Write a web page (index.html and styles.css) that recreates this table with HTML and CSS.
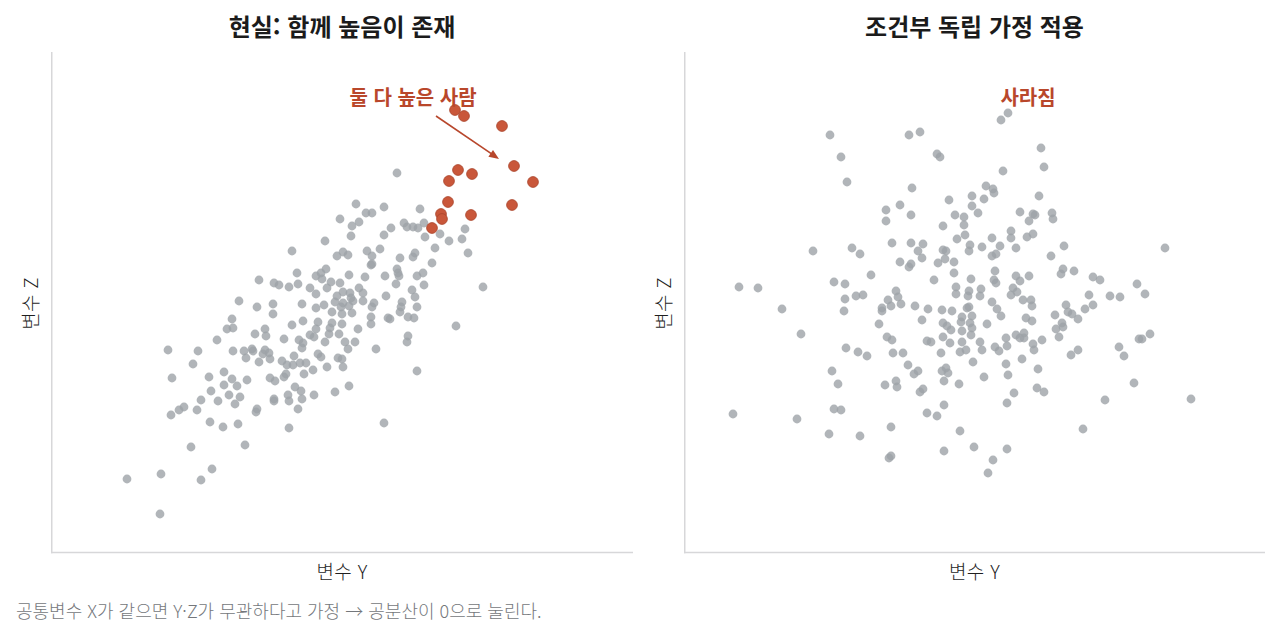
FILE: index.html
```html
<!DOCTYPE html>
<html lang="ko">
<head>
<meta charset="utf-8">
<title>조건부 독립</title>
<link rel="stylesheet" href="styles.css">
</head>
<body>
<div class="figure">
  <div class="panels">
    <section class="panel panel-left">
      <h2 class="title">현실: 함께 높음이 존재</h2>
      <div class="ylabel"><span>변수 Z</span></div>
      <svg class="plot" width="582" height="502" viewBox="51 52 582 502">
        <line class="spine" x1="51.75" y1="52" x2="51.75" y2="553.25"/>
        <line class="spine" x1="51" y1="552.5" x2="633" y2="552.5"/>
        <g class="pts">
          <circle cx="239" cy="301" r="4.4"/><circle cx="257" cy="307" r="4.4"/><circle cx="273" cy="304" r="4.4"/><circle cx="273" cy="314" r="4.4"/><circle cx="302" cy="304" r="4.4"/><circle cx="316" cy="308" r="4.4"/><circle cx="324" cy="305" r="4.4"/><circle cx="232" cy="319" r="4.4"/><circle cx="227" cy="329" r="4.4"/><circle cx="233" cy="328" r="4.4"/><circle cx="255" cy="334" r="4.4"/><circle cx="265" cy="329" r="4.4"/><circle cx="266" cy="336" r="4.4"/><circle cx="292" cy="325" r="4.4"/><circle cx="303" cy="321" r="4.4"/><circle cx="318" cy="322" r="4.4"/><circle cx="316" cy="329" r="4.4"/><circle cx="310" cy="335" r="4.4"/><circle cx="314" cy="337" r="4.4"/><circle cx="217" cy="340" r="4.4"/><circle cx="284" cy="339" r="4.4"/><circle cx="299" cy="340" r="4.4"/><circle cx="303" cy="343" r="4.4"/><circle cx="302" cy="348" r="4.4"/><circle cx="325" cy="342" r="4.4"/><circle cx="168" cy="350" r="4.4"/><circle cx="198" cy="351" r="4.4"/><circle cx="233" cy="351" r="4.4"/><circle cx="244" cy="351" r="4.4"/><circle cx="252" cy="349" r="4.4"/><circle cx="253" cy="351" r="4.4"/><circle cx="246" cy="358" r="4.4"/><circle cx="259" cy="362" r="4.4"/><circle cx="265" cy="350" r="4.4"/><circle cx="269" cy="353" r="4.4"/><circle cx="270" cy="359" r="4.4"/><circle cx="263" cy="354" r="4.4"/><circle cx="282" cy="361" r="4.4"/><circle cx="287" cy="365" r="4.4"/><circle cx="293" cy="365" r="4.4"/><circle cx="294" cy="356" r="4.4"/><circle cx="300" cy="363" r="4.4"/><circle cx="306" cy="363" r="4.4"/><circle cx="318" cy="354" r="4.4"/><circle cx="321" cy="357" r="4.4"/><circle cx="327" cy="367" r="4.4"/><circle cx="193" cy="364" r="4.4"/><circle cx="313" cy="370" r="4.4"/><circle cx="304" cy="374" r="4.4"/><circle cx="172" cy="378" r="4.4"/><circle cx="209" cy="377" r="4.4"/><circle cx="224" cy="372" r="4.4"/><circle cx="232" cy="379" r="4.4"/><circle cx="224" cy="385" r="4.4"/><circle cx="237" cy="386" r="4.4"/><circle cx="247" cy="380" r="4.4"/><circle cx="270" cy="378" r="4.4"/><circle cx="275" cy="381" r="4.4"/><circle cx="284" cy="377" r="4.4"/><circle cx="286" cy="374" r="4.4"/><circle cx="295" cy="387" r="4.4"/><circle cx="301" cy="391" r="4.4"/><circle cx="211" cy="391" r="4.4"/><circle cx="201" cy="400" r="4.4"/><circle cx="218" cy="401" r="4.4"/><circle cx="229" cy="395" r="4.4"/><circle cx="240" cy="397" r="4.4"/><circle cx="235" cy="404" r="4.4"/><circle cx="288" cy="395" r="4.4"/><circle cx="289" cy="401" r="4.4"/><circle cx="302" cy="399" r="4.4"/><circle cx="314" cy="395" r="4.4"/><circle cx="274" cy="399" r="4.4"/><circle cx="274" cy="401" r="4.4"/><circle cx="298" cy="409" r="4.4"/><circle cx="184" cy="407" r="4.4"/><circle cx="179" cy="410" r="4.4"/><circle cx="197" cy="410" r="4.4"/><circle cx="171" cy="415" r="4.4"/><circle cx="257" cy="409" r="4.4"/><circle cx="256" cy="412" r="4.4"/><circle cx="210" cy="422" r="4.4"/><circle cx="223" cy="427" r="4.4"/><circle cx="238" cy="424" r="4.4"/><circle cx="289" cy="428" r="4.4"/><circle cx="191" cy="447" r="4.4"/><circle cx="245" cy="445" r="4.4"/><circle cx="161" cy="474" r="4.4"/><circle cx="127" cy="479" r="4.4"/><circle cx="212" cy="469" r="4.4"/><circle cx="201" cy="480" r="4.4"/><circle cx="160" cy="514" r="4.4"/>
          <circle cx="397" cy="173" r="4.4"/><circle cx="356" cy="204" r="4.4"/><circle cx="384" cy="207" r="4.4"/><circle cx="420" cy="209" r="4.4"/><circle cx="340" cy="219" r="4.4"/><circle cx="366" cy="213" r="4.4"/><circle cx="372" cy="213" r="4.4"/><circle cx="359" cy="222" r="4.4"/><circle cx="352" cy="226" r="4.4"/><circle cx="391" cy="228" r="4.4"/><circle cx="404" cy="223" r="4.4"/><circle cx="407" cy="227" r="4.4"/><circle cx="413" cy="227" r="4.4"/><circle cx="418" cy="228" r="4.4"/><circle cx="424" cy="223" r="4.4"/><circle cx="351" cy="236" r="4.4"/><circle cx="384" cy="235" r="4.4"/><circle cx="425" cy="237" r="4.4"/><circle cx="440" cy="234" r="4.4"/><circle cx="449" cy="241" r="4.4"/><circle cx="462" cy="239" r="4.4"/><circle cx="465" cy="229" r="4.4"/><circle cx="325" cy="241" r="4.4"/><circle cx="343" cy="252" r="4.4"/><circle cx="337" cy="256" r="4.4"/><circle cx="348" cy="255" r="4.4"/><circle cx="367" cy="251" r="4.4"/><circle cx="372" cy="256" r="4.4"/><circle cx="380" cy="249" r="4.4"/><circle cx="400" cy="258" r="4.4"/><circle cx="413" cy="257" r="4.4"/><circle cx="415" cy="253" r="4.4"/><circle cx="435" cy="248" r="4.4"/><circle cx="468" cy="253" r="4.4"/><circle cx="432" cy="263" r="4.4"/><circle cx="371" cy="265" r="4.4"/><circle cx="372" cy="264" r="4.4"/><circle cx="397" cy="269" r="4.4"/><circle cx="398" cy="273" r="4.4"/><circle cx="399" cy="276" r="4.4"/><circle cx="385" cy="276" r="4.4"/><circle cx="417" cy="276" r="4.4"/><circle cx="423" cy="273" r="4.4"/><circle cx="349" cy="275" r="4.4"/><circle cx="365" cy="277" r="4.4"/><circle cx="326" cy="269" r="4.4"/><circle cx="321" cy="273" r="4.4"/><circle cx="316" cy="276" r="4.4"/><circle cx="322" cy="279" r="4.4"/><circle cx="331" cy="282" r="4.4"/><circle cx="340" cy="283" r="4.4"/><circle cx="327" cy="288" r="4.4"/><circle cx="310" cy="288" r="4.4"/><circle cx="316" cy="294" r="4.4"/><circle cx="337" cy="296" r="4.4"/><circle cx="343" cy="292" r="4.4"/><circle cx="350" cy="293" r="4.4"/><circle cx="359" cy="288" r="4.4"/><circle cx="363" cy="293" r="4.4"/><circle cx="351" cy="298" r="4.4"/><circle cx="335" cy="302" r="4.4"/><circle cx="343" cy="303" r="4.4"/><circle cx="353" cy="301" r="4.4"/><circle cx="349" cy="306" r="4.4"/><circle cx="341" cy="307" r="4.4"/><circle cx="363" cy="301" r="4.4"/><circle cx="374" cy="303" r="4.4"/><circle cx="372" cy="307" r="4.4"/><circle cx="386" cy="296" r="4.4"/><circle cx="396" cy="284" r="4.4"/><circle cx="412" cy="290" r="4.4"/><circle cx="424" cy="285" r="4.4"/><circle cx="415" cy="297" r="4.4"/><circle cx="402" cy="302" r="4.4"/><circle cx="401" cy="307" r="4.4"/><circle cx="400" cy="312" r="4.4"/><circle cx="417" cy="307" r="4.4"/><circle cx="483" cy="287" r="4.4"/><circle cx="332" cy="312" r="4.4"/><circle cx="342" cy="314" r="4.4"/><circle cx="352" cy="313" r="4.4"/><circle cx="371" cy="317" r="4.4"/><circle cx="371" cy="324" r="4.4"/><circle cx="388" cy="318" r="4.4"/><circle cx="390" cy="319" r="4.4"/><circle cx="408" cy="317" r="4.4"/><circle cx="414" cy="318" r="4.4"/><circle cx="332" cy="323" r="4.4"/><circle cx="330" cy="328" r="4.4"/><circle cx="342" cy="324" r="4.4"/><circle cx="358" cy="329" r="4.4"/><circle cx="329" cy="334" r="4.4"/><circle cx="339" cy="334" r="4.4"/><circle cx="345" cy="342" r="4.4"/><circle cx="348" cy="349" r="4.4"/><circle cx="355" cy="342" r="4.4"/><circle cx="376" cy="349" r="4.4"/><circle cx="407" cy="342" r="4.4"/><circle cx="408" cy="336" r="4.4"/><circle cx="456" cy="326" r="4.4"/><circle cx="338" cy="358" r="4.4"/><circle cx="342" cy="359" r="4.4"/>
          <circle cx="292" cy="251" r="4.4"/><circle cx="259" cy="280" r="4.4"/><circle cx="274" cy="283" r="4.4"/><circle cx="279" cy="285" r="4.4"/><circle cx="297" cy="273" r="4.4"/><circle cx="298" cy="284" r="4.4"/><circle cx="289" cy="287" r="4.4"/>
          <circle cx="349" cy="386" r="4.4"/><circle cx="335" cy="392" r="4.4"/><circle cx="384" cy="423" r="4.4"/><circle cx="417" cy="371" r="4.4"/><circle cx="343" cy="367" r="4.4"/>
        </g>
        <g class="hi">
          <circle cx="455" cy="110" r="5.4"/><circle cx="464" cy="116" r="5.4"/><circle cx="502" cy="126" r="5.4"/><circle cx="514" cy="166" r="5.4"/><circle cx="533" cy="182" r="5.4"/><circle cx="512" cy="205" r="5.4"/><circle cx="458" cy="170" r="5.4"/><circle cx="472" cy="174" r="5.4"/><circle cx="449" cy="181" r="5.4"/><circle cx="448" cy="202" r="5.4"/><circle cx="441" cy="214" r="5.4"/><circle cx="442" cy="219" r="5.4"/><circle cx="471" cy="215" r="5.4"/><circle cx="432" cy="228" r="5.4"/>
        </g>
        <line class="arrow-line" x1="436" y1="116" x2="492" y2="154.2"/>
        <polygon class="arrow-head" points="499,159 488.4,156.7 493,150.1"/>
        <text class="note" x="413" y="96">둘 다 높은 사람</text>
      </svg>
      <div class="xlabel">변수 Y</div>
    </section>

    <section class="panel panel-right">
      <h2 class="title">조건부 독립 가정 적용</h2>
      <div class="ylabel"><span>변수 Z</span></div>
      <svg class="plot" width="581" height="502" viewBox="684 52 581 502">
        <line class="spine" x1="684.75" y1="52" x2="684.75" y2="553.25"/>
        <line class="spine" x1="684" y1="552.5" x2="1265" y2="552.5"/>
        <g class="pts">
          <circle cx="830" cy="135" r="4.4"/><circle cx="909" cy="135" r="4.4"/><circle cx="920" cy="132" r="4.4"/><circle cx="841" cy="157" r="4.4"/><circle cx="937" cy="154" r="4.4"/><circle cx="940" cy="157" r="4.4"/><circle cx="847" cy="182" r="4.4"/><circle cx="912" cy="188" r="4.4"/><circle cx="949" cy="200" r="4.4"/><circle cx="900" cy="205" r="4.4"/><circle cx="886" cy="210" r="4.4"/><circle cx="886" cy="221" r="4.4"/><circle cx="911" cy="215" r="4.4"/><circle cx="955" cy="215" r="4.4"/><circle cx="943" cy="226" r="4.4"/><circle cx="957" cy="239" r="4.4"/><circle cx="813" cy="251" r="4.4"/><circle cx="852" cy="248" r="4.4"/><circle cx="860" cy="254" r="4.4"/><circle cx="892" cy="243" r="4.4"/><circle cx="911" cy="243" r="4.4"/><circle cx="923" cy="244" r="4.4"/><circle cx="918" cy="251" r="4.4"/><circle cx="922" cy="258" r="4.4"/><circle cx="943" cy="250" r="4.4"/><circle cx="946" cy="251" r="4.4"/><circle cx="945" cy="259" r="4.4"/><circle cx="938" cy="263" r="4.4"/><circle cx="954" cy="262" r="4.4"/><circle cx="900" cy="262" r="4.4"/><circle cx="911" cy="264" r="4.4"/><circle cx="909" cy="267" r="4.4"/><circle cx="871" cy="275" r="4.4"/><circle cx="954" cy="273" r="4.4"/><circle cx="934" cy="280" r="4.4"/><circle cx="739" cy="287" r="4.4"/><circle cx="758" cy="288" r="4.4"/><circle cx="834" cy="282" r="4.4"/><circle cx="845" cy="284" r="4.4"/><circle cx="896" cy="291" r="4.4"/><circle cx="956" cy="287" r="4.4"/><circle cx="956" cy="294" r="4.4"/><circle cx="856" cy="296" r="4.4"/><circle cx="863" cy="295" r="4.4"/><circle cx="845" cy="299" r="4.4"/><circle cx="888" cy="300" r="4.4"/><circle cx="898" cy="297" r="4.4"/>
          <circle cx="1008" cy="113" r="4.4"/><circle cx="1001" cy="120" r="4.4"/><circle cx="1041" cy="148" r="4.4"/><circle cx="1044" cy="167" r="4.4"/><circle cx="1003" cy="171" r="4.4"/><circle cx="986" cy="186" r="4.4"/><circle cx="993" cy="189" r="4.4"/><circle cx="994" cy="193" r="4.4"/><circle cx="972" cy="196" r="4.4"/><circle cx="984" cy="199" r="4.4"/><circle cx="1039" cy="196" r="4.4"/><circle cx="972" cy="206" r="4.4"/><circle cx="978" cy="213" r="4.4"/><circle cx="1020" cy="212" r="4.4"/><circle cx="964" cy="217" r="4.4"/><circle cx="1033" cy="214" r="4.4"/><circle cx="1035" cy="215" r="4.4"/><circle cx="1052" cy="213" r="4.4"/><circle cx="1053" cy="219" r="4.4"/><circle cx="1029" cy="221" r="4.4"/><circle cx="964" cy="225" r="4.4"/><circle cx="965" cy="235" r="4.4"/><circle cx="1011" cy="231" r="4.4"/><circle cx="1011" cy="238" r="4.4"/><circle cx="992" cy="238" r="4.4"/><circle cx="1027" cy="237" r="4.4"/><circle cx="1033" cy="234" r="4.4"/><circle cx="970" cy="245" r="4.4"/><circle cx="969" cy="251" r="4.4"/><circle cx="982" cy="247" r="4.4"/><circle cx="1000" cy="246" r="4.4"/><circle cx="1016" cy="248" r="4.4"/><circle cx="1064" cy="246" r="4.4"/><circle cx="1165" cy="248" r="4.4"/><circle cx="992" cy="256" r="4.4"/><circle cx="996" cy="254" r="4.4"/><circle cx="1051" cy="256" r="4.4"/><circle cx="995" cy="271" r="4.4"/><circle cx="994" cy="280" r="4.4"/><circle cx="996" cy="283" r="4.4"/><circle cx="971" cy="279" r="4.4"/><circle cx="1016" cy="276" r="4.4"/><circle cx="1020" cy="281" r="4.4"/><circle cx="1029" cy="276" r="4.4"/><circle cx="1063" cy="269" r="4.4"/><circle cx="1061" cy="274" r="4.4"/><circle cx="1074" cy="271" r="4.4"/><circle cx="1093" cy="277" r="4.4"/><circle cx="1100" cy="280" r="4.4"/><circle cx="1137" cy="284" r="4.4"/><circle cx="1145" cy="294" r="4.4"/><circle cx="1089" cy="295" r="4.4"/><circle cx="1110" cy="296" r="4.4"/><circle cx="1120" cy="297" r="4.4"/><circle cx="969" cy="291" r="4.4"/><circle cx="968" cy="296" r="4.4"/><circle cx="981" cy="289" r="4.4"/><circle cx="980" cy="296" r="4.4"/><circle cx="1011" cy="295" r="4.4"/><circle cx="1013" cy="288" r="4.4"/><circle cx="1017" cy="292" r="4.4"/>
          <circle cx="782" cy="309" r="4.4"/><circle cx="801" cy="334" r="4.4"/><circle cx="844" cy="311" r="4.4"/><circle cx="882" cy="308" r="4.4"/><circle cx="882" cy="311" r="4.4"/><circle cx="891" cy="306" r="4.4"/><circle cx="901" cy="304" r="4.4"/><circle cx="915" cy="306" r="4.4"/><circle cx="928" cy="309" r="4.4"/><circle cx="942" cy="310" r="4.4"/><circle cx="952" cy="311" r="4.4"/><circle cx="879" cy="324" r="4.4"/><circle cx="922" cy="320" r="4.4"/><circle cx="943" cy="323" r="4.4"/><circle cx="947" cy="326" r="4.4"/><circle cx="951" cy="330" r="4.4"/><circle cx="887" cy="337" r="4.4"/><circle cx="892" cy="340" r="4.4"/><circle cx="927" cy="341" r="4.4"/><circle cx="931" cy="342" r="4.4"/><circle cx="943" cy="337" r="4.4"/><circle cx="950" cy="343" r="4.4"/><circle cx="846" cy="348" r="4.4"/><circle cx="858" cy="352" r="4.4"/><circle cx="867" cy="356" r="4.4"/><circle cx="893" cy="353" r="4.4"/><circle cx="903" cy="353" r="4.4"/><circle cx="941" cy="353" r="4.4"/><circle cx="960" cy="352" r="4.4"/><circle cx="908" cy="365" r="4.4"/><circle cx="918" cy="371" r="4.4"/><circle cx="914" cy="374" r="4.4"/><circle cx="942" cy="371" r="4.4"/><circle cx="946" cy="368" r="4.4"/><circle cx="948" cy="373" r="4.4"/><circle cx="944" cy="381" r="4.4"/><circle cx="959" cy="384" r="4.4"/><circle cx="832" cy="371" r="4.4"/><circle cx="838" cy="384" r="4.4"/><circle cx="885" cy="385" r="4.4"/><circle cx="896" cy="381" r="4.4"/><circle cx="897" cy="387" r="4.4"/><circle cx="923" cy="389" r="4.4"/><circle cx="920" cy="392" r="4.4"/><circle cx="834" cy="409" r="4.4"/><circle cx="841" cy="410" r="4.4"/><circle cx="944" cy="405" r="4.4"/><circle cx="927" cy="413" r="4.4"/><circle cx="937" cy="416" r="4.4"/><circle cx="733" cy="414" r="4.4"/><circle cx="797" cy="419" r="4.4"/><circle cx="829" cy="434" r="4.4"/><circle cx="860" cy="436" r="4.4"/><circle cx="891" cy="427" r="4.4"/><circle cx="960" cy="431" r="4.4"/><circle cx="944" cy="451" r="4.4"/><circle cx="891" cy="456" r="4.4"/><circle cx="889" cy="458" r="4.4"/>
          <circle cx="992" cy="302" r="4.4"/><circle cx="997" cy="309" r="4.4"/><circle cx="1001" cy="316" r="4.4"/><circle cx="1023" cy="300" r="4.4"/><circle cx="1031" cy="300" r="4.4"/><circle cx="1032" cy="306" r="4.4"/><circle cx="967" cy="308" r="4.4"/><circle cx="969" cy="307" r="4.4"/><circle cx="962" cy="317" r="4.4"/><circle cx="972" cy="316" r="4.4"/><circle cx="961" cy="322" r="4.4"/><circle cx="970" cy="323" r="4.4"/><circle cx="972" cy="328" r="4.4"/><circle cx="962" cy="331" r="4.4"/><circle cx="971" cy="335" r="4.4"/><circle cx="987" cy="324" r="4.4"/><circle cx="1026" cy="318" r="4.4"/><circle cx="1032" cy="321" r="4.4"/><circle cx="1066" cy="305" r="4.4"/><circle cx="1068" cy="312" r="4.4"/><circle cx="1072" cy="314" r="4.4"/><circle cx="1078" cy="319" r="4.4"/><circle cx="1085" cy="309" r="4.4"/><circle cx="1093" cy="305" r="4.4"/><circle cx="1055" cy="315" r="4.4"/><circle cx="1062" cy="323" r="4.4"/><circle cx="1063" cy="327" r="4.4"/><circle cx="1056" cy="329" r="4.4"/><circle cx="1059" cy="337" r="4.4"/><circle cx="962" cy="342" r="4.4"/><circle cx="966" cy="350" r="4.4"/><circle cx="980" cy="342" r="4.4"/><circle cx="982" cy="350" r="4.4"/><circle cx="973" cy="362" r="4.4"/><circle cx="995" cy="347" r="4.4"/><circle cx="999" cy="351" r="4.4"/><circle cx="1006" cy="338" r="4.4"/><circle cx="1007" cy="346" r="4.4"/><circle cx="1016" cy="335" r="4.4"/><circle cx="1020" cy="338" r="4.4"/><circle cx="1024" cy="333" r="4.4"/><circle cx="1024" cy="338" r="4.4"/><circle cx="1033" cy="344" r="4.4"/><circle cx="1034" cy="350" r="4.4"/><circle cx="1042" cy="340" r="4.4"/><circle cx="1022" cy="359" r="4.4"/><circle cx="1006" cy="364" r="4.4"/><circle cx="1008" cy="375" r="4.4"/><circle cx="1038" cy="369" r="4.4"/><circle cx="984" cy="377" r="4.4"/><circle cx="1014" cy="393" r="4.4"/><circle cx="1007" cy="403" r="4.4"/><circle cx="1037" cy="388" r="4.4"/><circle cx="1044" cy="392" r="4.4"/><circle cx="1071" cy="355" r="4.4"/><circle cx="1078" cy="350" r="4.4"/><circle cx="1119" cy="347" r="4.4"/><circle cx="1124" cy="356" r="4.4"/><circle cx="1139" cy="339" r="4.4"/><circle cx="1142" cy="339" r="4.4"/><circle cx="1150" cy="334" r="4.4"/><circle cx="1134" cy="383" r="4.4"/><circle cx="1105" cy="400" r="4.4"/><circle cx="1191" cy="399" r="4.4"/><circle cx="1083" cy="429" r="4.4"/><circle cx="974" cy="447" r="4.4"/><circle cx="1007" cy="449" r="4.4"/><circle cx="993" cy="460" r="4.4"/><circle cx="988" cy="473" r="4.4"/>
        </g>
        <text class="note" x="1028" y="96">사라짐</text>
      </svg>
      <div class="xlabel">변수 Y</div>
    </section>
  </div>
  <p class="caption">공통변수 X가 같으면 Y·Z가 무관하다고 가정 → 공분산이 0으로 눌린다.</p>
</div>
</body>
</html>
```

FILE: styles.css
```css
* { box-sizing: border-box; }

html, body {
  margin: 0;
  padding: 0;
  background: #ffffff;
}

body {
  width: 1280px;
  height: 637px;
  overflow: hidden;
  font-family: "Noto Sans CJK KR", "Noto Sans", "Liberation Sans", sans-serif;
  color: #1f1f1f;
}

.figure {
  display: flex;
  flex-direction: column;
}

.panels {
  display: flex;
}

.panel {
  display: grid;
  grid-template-rows: 52px 502px 34px;
}

.panel-left { grid-template-columns: 51px 582px; }
.panel-right { grid-template-columns: 51px 581px; }

.title {
  grid-column: 2;
  grid-row: 1;
  margin: 0;
  font-size: 24px;
  font-weight: 700;
  line-height: 52px;
  text-align: center;
  color: #1b1b1b;
}

.ylabel {
  grid-column: 1;
  grid-row: 2;
  display: flex;
  align-items: center;
  justify-content: center;
  padding-left: 9px;
}

.ylabel span {
  writing-mode: vertical-rl;
  text-orientation: sideways;
  transform: rotate(180deg);
  font-size: 19px;
  font-weight: 300;
  line-height: 22px;
  color: #1f1f1f;
  white-space: nowrap;
  letter-spacing: 0.3px;
}

.plot {
  grid-column: 2;
  grid-row: 2;
  display: block;
  overflow: visible;
}

.xlabel {
  grid-column: 2;
  grid-row: 3;
  text-align: center;
  font-size: 19px;
  font-weight: 300;
  line-height: 34px;
  color: #1f1f1f;
  letter-spacing: 0.3px;
}

.spine {
  stroke: #d7d7d9;
  stroke-width: 1.5;
}

.pts circle {
  fill: #9ea2a8;
  fill-opacity: 0.8;
}

.hi circle {
  fill: #c9573a;
  stroke: #a9442b;
  stroke-width: 0.8;
}

.arrow-line {
  stroke: #b8472c;
  stroke-width: 1.6;
}

.arrow-head {
  fill: #b8472c;
}

.note {
  font-family: "Noto Sans CJK KR", "Noto Sans", sans-serif;
  font-size: 20px;
  font-weight: 700;
  fill: #b9472b;
  text-anchor: middle;
  dominant-baseline: central;
}

.caption {
  margin: 0;
  padding-left: 16px;
  font-size: 18px;
  font-weight: 300;
  line-height: 44px;
  color: #74777b;
}
```
